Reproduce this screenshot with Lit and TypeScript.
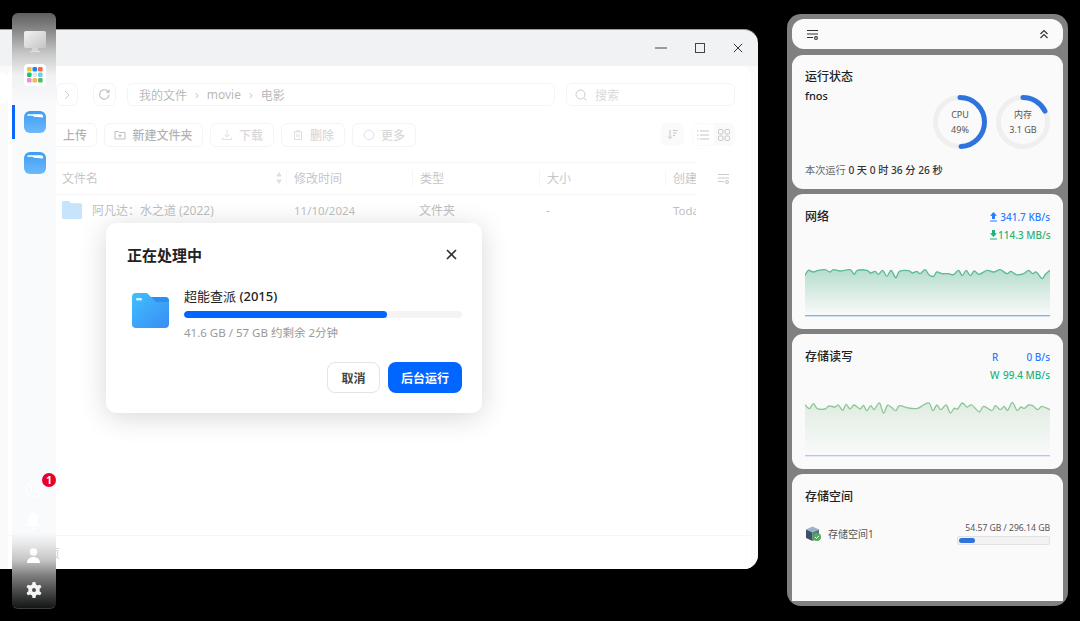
import { LitElement, html, css, svg } from "lit";
import { customElement } from "lit/decorators.js";

type P = [number, number];
const NET: P[] = [[75,255],[85,240],[100,245],[115,240],[135,238],[150,245],[160,238],[180,242],[210,238],[222,252],[232,240],[260,240],[272,248],[285,243],[295,252],[308,240],[320,258],[333,240],[347,262],[358,243],[385,241],[397,248],[410,243],[420,250],[435,238],[447,254],[460,258],[470,245],[485,250],[505,250],[520,253],[535,240],[546,256],[558,240],[570,256],[582,242],[597,252],[620,240],[640,245],[660,238],[680,250],[692,243],[708,253],[730,250],[745,240],[757,250],[768,245],[785,265],[795,252],[809,240]];
const DISK: P[] = [[75,223],[88,235],[100,220],[112,235],[135,236],[147,227],[165,230],[175,224],[188,240],[198,222],[210,236],[222,224],[240,236],[250,225],[260,241],[272,226],[282,238],[298,218],[310,248],[322,225],[335,232],[347,241],[358,226],[385,233],[412,234],[430,224],[447,218],[458,241],[470,224],[482,238],[498,224],[510,248],[522,234],[532,236],[546,218],[560,230],[575,224],[597,245],[610,228],[635,241],[645,226],[660,238],[672,228],[682,240],[696,216],[710,240],[722,230],[732,234],[745,224],[757,226],[772,238],[785,228],[809,238]];

function smooth(p: P[]): string {
  let d = `M${p[0][0]} ${p[0][1]}`;
  for (let i = 0; i < p.length - 1; i++) {
    const a = p[Math.max(0, i - 1)], b = p[i], c = p[i + 1], e = p[Math.min(p.length - 1, i + 2)];
    d += `C${b[0] + (c[0] - a[0]) / 6} ${b[1] + (c[1] - a[1]) / 6} ${c[0] - (e[0] - b[0]) / 6} ${c[1] - (e[1] - b[1]) / 6} ${c[0]} ${c[1]}`;
  }
  return d;
}

function chart(id: string, pts: P[], line: string, top: string, topOp: number, base: string) {
  const d = smooth(pts);
  return html`<svg class="chart" viewBox="75 200 734 180" preserveAspectRatio="none">
    <defs><linearGradient id=${id} x1="0" y1="0" x2="0" y2="1">
      <stop offset="0" stop-color=${top} stop-opacity=${topOp}></stop>
      <stop offset="1" stop-color=${top} stop-opacity="0"></stop>
    </linearGradient></defs>
    <path d="${d}L809 375L75 375Z" fill="url(#${id})"></path>
    <path d=${d} fill="none" stroke=${line} stroke-width="4"></path>
    <path d="M75 376H809" stroke=${base} stroke-width="3"></path>
  </svg>`;
}

const filterIcon = (c: string) => html`<svg width="13" height="13" viewBox="0 0 13 13" fill="none" stroke=${c} stroke-width="1.1"><path d="M1 2.5H12M1 6H12M1 9.5H7"/><circle cx="10" cy="10" r="1.4"/></svg>`;

function ring(label: string, value: string, pct: number) {
  const r = 24.5, c = 2 * Math.PI * r;
  return html`<div class="ring">
    <svg width="54" height="54" viewBox="0 0 54 54">
      <circle cx="27" cy="27" r=${r} fill="none" stroke="#efefef" stroke-width="5"></circle>
      <circle cx="27" cy="27" r=${r} fill="none" stroke="#2f74de" stroke-width="5" stroke-linecap="round"
        stroke-dasharray="${c * pct} ${c}" transform="rotate(-90 27 27)"></circle>
    </svg>
    <div class="ring-text"><span>${label}</span><span>${value}</span></div>
  </div>`;
}

const folderBlue = html`<svg width="22" height="22" viewBox="0 0 22 22">
  <defs><linearGradient id="fb" x1="0" y1="0" x2="0" y2="1"><stop offset="0" stop-color="#3f9df2"/><stop offset="1" stop-color="#6db9fb"/></linearGradient></defs>
  <rect width="22" height="22" rx="6" fill="url(#fb)"/>
  <path d="M3 4.6C3 3.6 4 3.2 5 3.2H17C18.5 3.2 19 4 19 5V6.4L10 5.7L8.5 4.8H4Z" fill="#fff"/>
</svg>`;

@customElement("app-root")
export class AppRoot extends LitElement {
  static styles = css`
    :host { display: block; position: relative; width: 1080px; height: 621px; background: #000; overflow: hidden;
      font-family: "Noto Sans", "Noto Sans CJK SC", sans-serif; color: #333; }
    svg { display: block; flex: none; }

    .window { position: absolute; left: 0; top: 29px; width: 758px; height: 540px; display: flex; flex-direction: column;
      background: #f1f2f4; border-radius: 0 14px 14px 0; overflow: hidden; border-top: 1px solid #9a9a9a; box-sizing: border-box; }
    .titlebar { height: 36px; flex: none; display: flex; justify-content: flex-end; align-items: center; padding-right: 15px; gap: 28px; }
    .titlebar .min { width: 12px; height: 12px; }
    .titlebar .sm { width: 10px; height: 10px; }
    .body { flex: 1; display: flex; position: relative; min-height: 0; }
    .side { width: 8px; flex: none; padding-top: 7px; }
    .side div { height: 31px; background: #fff; border-radius: 0 6px 6px 0; }
    .main { flex: 1; background: #fff; border-radius: 10px 10px 0 0; margin-right: 7px; padding: 17px 16px 0 0;
      display: flex; flex-direction: column; min-width: 0; }
    .scrim { position: absolute; inset: 0; background: rgba(255,255,255,.62); }

    .nav { display: flex; gap: 11px; height: 23px; padding-left: 48px; }
    .box { border: 1px solid #dfe1e5; border-radius: 6px; box-sizing: border-box; display: flex; align-items: center; justify-content: center; }
    .sq { width: 23px; height: 23px; }
    .refresh { margin-left: 5px; }
    .fwd { margin-right: -1px; width: 22px; }
    .path { flex: 1; justify-content: flex-start; padding-left: 11px; gap: 8px; font-size: 12px; color: #444; }
    .path i { font-style: normal; color: #777; }
    .search { width: 169px; justify-content: flex-start; padding-left: 8px; gap: 8px; font-size: 12px; color: #999; }

    .actions { display: flex; margin-top: 17px; height: 24px; padding-left: 40px; gap: 7px; }
    .btn { font-size: 12px; font-weight: 500; gap: 6px; color: #333; width: 64px; }
    .btn.off { color: #999; }
    .btn.off svg { opacity: .6; }
    .b-up { width: 49px; padding-left: 5px; }
    .b-new { width: 99px; }
    .actions .grow { flex: 1; }
    .sort { width: 23px; height: 23px; background: #f1f2f4; border-radius: 6px; display: flex; align-items: center; justify-content: center; }
    .view { width: 43px; height: 23px; background: #f1f2f4; border-radius: 6px; display: flex; align-items: center; padding: 1px; box-sizing: border-box; margin-left: 1px; }
    .view span { flex: 1; display: flex; align-items: center; justify-content: center; height: 100%; border-radius: 5px; }
    .view span:first-child { background: #fff; }

    .table { margin-top: 15px; position: relative; font-size: 12px; }
    .thead, .trow { display: grid; grid-template-columns: 238px 126px 127px 126px 31px; width: 648px; margin-left: 40px; overflow: hidden; align-items: center; }
    .thead { height: 31px; border-top: 1px solid #e6e7ea; border-bottom: 1px solid #e6e7ea; color: #666; }
    .cell { padding-left: 7px; white-space: nowrap; overflow: hidden; position: relative; display: flex; align-items: center; justify-content: space-between; height: 14px; }
    .thead .cell { border-left: 1px solid #e6e7ea; height: 16px; margin-bottom: 2px; }
    .thead .cell:first-child { border-left: 0; padding-left: 14px; padding-right: 3px; }
    .trow { height: 32px; color: #555; }
    .trow .cell { height: 18px; margin-bottom: 2px; }
    .trow .cell:first-child { padding-left: 13px; justify-content: flex-start; gap: 9px; height: 22px; }
    .date { font-size: 11.5px; padding-left: 8px !important; }
    .set { position: absolute; left: 709px; top: 10px; }
    .footer { margin-top: auto; height: 33px; margin-right: -16px; border-top: 1px solid #e6e7ea; font-size: 12px; color: #777; display: flex; align-items: center; padding-left: 40px; flex: none; }

    .dock { position: absolute; left: 12px; top: 13px; width: 44px; height: 596px; box-sizing: border-box; border-radius: 6px; display: flex; flex-direction: column; align-items: center;
      border-bottom: 1px solid #3c3c3c;
      background: linear-gradient(#5f5f5f 0, #8f8f8f 20px, #c6c6c6 40px, #f0f1f2 62px, #f9fafc 90px, #f9fafc 520px, #e6e6e6 532px, #c5c5c5 547px, #7c7c7c 563px, #3c3d3c 582px, #111214 596px); }
    .dock .ic { position: absolute; left: 12px; }
    .ic.mon { top: 18px; }
    .ic.grid { top: 51px; }
    .ic.f1 { top: 98px; }
    .ic.f2 { top: 139px; }
    .ic.sync { left: 13px; top: 467px; }
    .ic.bell { left: 14px; top: 500px; }
    .ic.user { left: 15px; top: 535px; }
    .ic.gear { left: 14px; top: 569px; }
    .active { position: absolute; left: 0; top: 92px; width: 3px; height: 34px; background: #0a66ff; }
    .badge { position: absolute; left: 30px; top: 460px; width: 14px; height: 14px; border-radius: 50%; background: #e8002d; color: #fff; font-size: 10px; font-weight: 700; line-height: 14px; text-align: center; }

    .dialog { position: absolute; left: 106px; top: 223px; width: 376px; height: 190px; box-sizing: border-box; background: #fff; border-radius: 10px;
      box-shadow: 0 4px 28px rgba(0,0,0,.16); padding: 19px 20px 20px 21px; display: flex; flex-direction: column; }
    .dlg-head { display: flex; justify-content: space-between; align-items: center; height: 24px; }
    .dlg-head b { font-size: 15px; font-weight: 700; color: #222; }
    .dlg-close { margin-right: 5px; }
    .dlg-body { display: flex; margin-top: 21px; gap: 15px; padding-left: 5px; }
    .dlg-folder { margin-top: 6px; }
    .dlg-info { flex: 1; }
    .dlg-name { font-size: 13px; font-weight: 400; color: #222; line-height: 18px; }
    .dlg-name span { font-weight: 500; }
    .bar { height: 7px; margin-top: 6px; border-radius: 4px; background: #f4f4f5; overflow: hidden; }
    .bar div { height: 100%; background: #0066ff; border-radius: 4px; }
    .dlg-sub { font-size: 11.5px; color: #999; margin-top: 7px; line-height: 16px; }
    .dlg-foot { margin-top: auto; display: flex; justify-content: flex-end; gap: 8px; }
    .b { height: 31px; border-radius: 8px; box-sizing: border-box; font-size: 12px; font-weight: 700; display: flex; align-items: center; justify-content: center; }
    .cancel { width: 53px; border: 1px solid #e4e4e6; color: #444; }
    .ok { width: 74px; background: #0066ff; color: #fff; }

    .panel { position: absolute; left: 787px; top: 14px; width: 281px; height: 592px; box-sizing: border-box; background: #808080; border-radius: 14px; padding: 5px; display: flex; flex-direction: column; gap: 5px; }
    .card { background: #fafafa; border-radius: 11px; width: 271px; box-sizing: border-box; padding: 14px 13px; position: relative; flex: none; }
    .pill { height: 30px; padding: 0 14px; display: flex; align-items: center; justify-content: space-between; border-radius: 12px; margin-bottom: 1px; }
    .h { font-size: 12px; font-weight: 500; color: #222; line-height: 16px; }
    .status { height: 134px; }
    .host { font-size: 11px; font-weight: 500; color: #222; margin-top: 3px; line-height: 16px; }
    .rings { position: absolute; right: 13px; top: 40px; display: flex; gap: 9px; }
    .ring { position: relative; width: 54px; height: 54px; }
    .ring-text { position: absolute; inset: 0; display: flex; flex-direction: column; align-items: center; justify-content: center; font-size: 9px; line-height: 15px; color: #555; }
    .uptime { position: absolute; left: 13px; top: 107px; font-size: 10.2px; font-weight: 500; color: #333; white-space: nowrap; line-height: 16px; }
    .uptime span { font-weight: 400; color: #666; }
    .graph { height: 135px; padding-top: 15px; }
    .rates { position: absolute; right: 13px; top: 16px; display: flex; flex-direction: column; gap: 4px; align-items: flex-end; font-size: 10px; font-weight: 500; line-height: 14px; white-space: nowrap; }
    .rate { display: flex; align-items: center; justify-content: space-between; }
    .rate-a { width: 61px; }
    .rate-b { width: 61px; }
    .rate-c { width: 58px; }
    .rate-d { width: 60px; }
    .blue { color: #2a7bff; }
    .green { color: #1fb27a; }
    .chart { position: absolute; left: 13px; top: 63px; width: 245px; height: 60px; }
    .storage { flex: 1; border-radius: 11px 11px 0 0; padding-top: 15px; }
    .vol { display: flex; align-items: center; margin-top: 17px; justify-content: space-between; }
    .vol-l { display: flex; align-items: center; gap: 6px; font-size: 10px; color: #555; }
    .vol-r { width: 93px; font-size: 8.6px; color: #555; text-align: right; line-height: 12px; white-space: nowrap; display: flex; flex-direction: column; align-items: flex-end; }
    .vbar { width: 93px; height: 9px; box-sizing: border-box; border: 1px solid #e2e2e2; background: #f2f2f2; border-radius: 2px; margin-top: 2px; padding: 1px; }
    .vbar div { height: 100%; background: #2f74de; border-radius: 3px; }
  `;

  render() {
    return html`
      <div class="window">
        <div class="titlebar">
          <svg class="min" viewBox="0 0 12 12" stroke="#444" fill="none" stroke-width="1.1"><path d="M0 6H12"/></svg>
          <svg class="sm" viewBox="0 0 12 12" stroke="#444" fill="none" stroke-width="1.2"><rect x=".6" y=".6" width="10.8" height="10.8"/></svg>
          <svg class="sm" viewBox="0 0 12 12" stroke="#333" fill="none" stroke-width="1.2"><path d="M1 1L11 11M11 1L1 11"/></svg>
        </div>
        <div class="body">
          <div class="side"><div></div></div>
          <div class="main">
            <div class="nav">
              <div class="box sq fwd"><svg width="8" height="10" viewBox="0 0 8 10" fill="none" stroke="#777" stroke-width="1"><path d="M2 1L6 5L2 9"/></svg></div>
              <div class="box sq refresh"><svg width="13" height="13" viewBox="0 0 13 13" fill="none" stroke="#555" stroke-width="1.1"><path d="M11 6.5A4.7 4.7 0 1 1 9.5 3L11 4.3M11 1.5V4.3H8.2"/></svg></div>
              <div class="box path">我的文件 <i>›</i> movie <i>›</i> 电影</div>
              <div class="box search"><svg width="12" height="12" viewBox="0 0 12 12" fill="none" stroke="#777" stroke-width="1"><circle cx="5.5" cy="5.5" r="4.5"/><path d="M9 9L11.5 11.5"/></svg>搜索</div>
            </div>
            <div class="actions">
              <div class="box btn b-up">上传</div>
              <div class="box btn b-new"><svg width="12" height="12" viewBox="0 0 12 12" fill="none" stroke="#555"><path d="M1 10V2.5H4.5L5.5 3.5H11V10ZM6 5V8.5M4.3 6.7H7.7"/></svg>新建文件夹</div>
              <div class="box btn off"><svg width="12" height="12" viewBox="0 0 12 12" fill="none" stroke="#777"><path d="M6 1V8M3.5 5.5L6 8L8.5 5.5M1.5 8.5V10.5H10.5V8.5"/></svg>下载</div>
              <div class="box btn off"><svg width="12" height="12" viewBox="0 0 12 12" fill="none" stroke="#777"><path d="M1.5 3H10.5M4.5 3V1.5H7.5V3M2.5 3V10.5H9.5V3M5 5V8.5M7 5V8.5"/></svg>删除</div>
              <div class="box btn off"><svg width="12" height="12" viewBox="0 0 12 12" fill="none" stroke="#777"><circle cx="6" cy="6" r="4.8"/></svg>更多</div>
              <div class="grow"></div>
              <div class="sort"><svg width="11" height="11" viewBox="0 0 11 11" fill="none" stroke="#666"><path d="M3 1V9.5M1 7.5L3 9.5L5 7.5M6 1.5H10.5M6 4H9.5M6 6.5H8"/></svg></div>
              <div class="view">
                <span><svg width="12" height="10" viewBox="0 0 12 10" fill="none" stroke="#666"><path d="M3 1H12M3 5H12M3 9H12M0 1H1.4M0 5H1.4M0 9H1.4"/></svg></span>
                <span><svg width="12" height="12" viewBox="0 0 12 12" fill="none" stroke="#666"><rect x=".5" y=".5" width="4.5" height="4.5" rx="1.2"/><rect x="7" y=".5" width="4.5" height="4.5" rx="1.2"/><rect x=".5" y="7" width="4.5" height="4.5" rx="1.2"/><rect x="7" y="7" width="4.5" height="4.5" rx="1.2"/></svg></span>
              </div>
            </div>
            <div class="table">
              <div class="thead">
                <div class="cell">文件名<svg width="8" height="14" viewBox="0 0 8 14" fill="#aaa"><path d="M4 1L7 5.5H1ZM4 13L1 8.5H7Z"/></svg></div>
                <div class="cell">修改时间</div><div class="cell">类型</div><div class="cell">大小</div><div class="cell">创建</div>
              </div>
              <div class="trow">
                <div class="cell"><svg width="22" height="20" viewBox="0 0 22 20"><path d="M1 3C1 1.5 2 1 3 1H8L10 3.2H19.5C20.5 3.2 21 4 21 5V17.5C21 18.5 20.3 19 19.5 19H2.5C1.5 19 1 18.5 1 17.5Z" fill="#6ab8f7"/></svg>阿凡达：水之道 (2022)</div>
                <div class="cell date">11/10/2024</div><div class="cell">文件夹</div><div class="cell">-</div><div class="cell date">Today</div>
              </div>
              <div class="set">${filterIcon("#777")}</div>
            </div>
            <div class="footer">页</div>
          </div>
          <div class="scrim"></div>
        </div>
      </div>

      <div class="dialog">
        <div class="dlg-head"><b>正在处理中</b>
          <svg class="dlg-close" width="11" height="11" viewBox="0 0 11 11" fill="none" stroke="#333" stroke-width="1.7"><path d="M1 1L10 10M10 1L1 10"/></svg>
        </div>
        <div class="dlg-body">
          <svg class="dlg-folder" width="37" height="35" viewBox="0 0 37 35">
            <defs><linearGradient id="df" x1="0" y1="0" x2="1" y2="1"><stop offset="0" stop-color="#3fc0ff"/><stop offset="1" stop-color="#3a8cf2"/></linearGradient></defs>
            <path d="M0 4C0 1.5 1.5 0 3.5 0H15L19 4H33C35.5 4 37 5.5 37 8V31C37 33.5 35.5 35 33 35H4C1.5 35 0 33.5 0 31Z" fill="url(#df)"/>
            <path d="M19 4H33C35.5 4 37 5.5 37 8V9H24Z" fill="#2a8ff0"/>
            <rect x="4" y="5" width="6" height="2.6" rx="1.3" fill="#d4f1ff"/>
          </svg>
          <div class="dlg-info">
            <div class="dlg-name">超能查派 <span>(2015)</span></div>
            <div class="bar"><div style="width:73%"></div></div>
            <div class="dlg-sub">41.6 GB / 57 GB 约剩余 2分钟</div>
          </div>
        </div>
        <div class="dlg-foot"><div class="b cancel">取消</div><div class="b ok">后台运行</div></div>
      </div>

      <div class="dock">
        <svg class="ic mon" width="22" height="23" viewBox="0 0 22 23"><defs><linearGradient id="mon" x1="0" y1="0" x2="1" y2="1"><stop offset="0" stop-color="#f2f2f2"/><stop offset="1" stop-color="#c4c4c4"/></linearGradient></defs><rect width="22" height="17" rx="2" fill="url(#mon)"/><rect x="8" y="17" width="6" height="3" fill="#d4d4d4"/><rect x="6" y="20" width="10" height="1.2" fill="#dfdfdf"/></svg>
        <svg class="ic grid" width="22" height="22" viewBox="0 0 22 22">
          <rect width="22" height="22" rx="4" fill="#fff"/>
          ${[["#fbc02d",3,3],["#1e88e5",8.5,3],["#ef6a50",14,3],["#1cc36b",3,8.5],["#dfe8f2",8.5,8.5],["#6fcdf4",14,8.5],["#ee8fce",3,14],["#f3b562",8.5,14],["#4cc15a",14,14]].map(([c,x,y]) => svg`<rect x=${x} y=${y} width="4.6" height="4.6" rx="1.3" fill=${c}/>`)}
        </svg>
        <div class="active"></div>
        <div class="ic f1">${folderBlue}</div>
        <div class="ic f2">${folderBlue}</div>
        <svg class="ic sync" width="18" height="18" viewBox="0 0 18 18" fill="none" stroke="#fff" stroke-width="1.2"><circle cx="9" cy="9" r="8"/><path d="M6 6V12M12 6V12M4.5 7.5L6 6L7.5 7.5M10.5 10.5L12 12L13.5 10.5"/></svg>
        <div class="badge">1</div>
        <svg class="ic bell" width="14" height="17" viewBox="0 0 14 17" fill="#fff"><path d="M7 0C3.5 0 2.3 3 2.3 5.5V10L0 13H14L11.7 10V5.5C11.7 3 10.5 0 7 0ZM5 14.5H9C9 16 8 17 7 17S5 16 5 14.5Z"/></svg>
        <svg class="ic user" width="13" height="15" viewBox="0 0 13 15" fill="#fff"><circle cx="6.5" cy="4" r="3.7"/><path d="M0 15C0 11 3 9 6.5 9S13 11 13 15Z"/></svg>
        <svg class="ic gear" width="16" height="16" viewBox="2.2 1.5 19.6 20" fill="#f4f4f4"><path fill-rule="evenodd" d="M13.8 1.5L14.4 4.6C15.2 4.9 15.9 5.3 16.6 5.8L19.6 4.8L21.4 7.9L19 10C19.1 10.9 19.1 12.1 19 13L21.4 15.1L19.6 18.2L16.6 17.2C15.9 17.7 15.2 18.1 14.4 18.4L13.8 21.5H10.2L9.6 18.4C8.8 18.1 8.1 17.7 7.4 17.2L4.4 18.2L2.6 15.1L5 13C4.9 12.1 4.9 10.9 5 10L2.6 7.9L4.4 4.8L7.4 5.8C8.1 5.3 8.8 4.9 9.6 4.6L10.2 1.5ZM12 9A2.5 2.5 0 1 0 12 14A2.5 2.5 0 0 0 12 9Z"/></svg>
      </div>

      <div class="panel">
        <div class="card pill">
          ${filterIcon("#333")}
          <svg width="10" height="10" viewBox="0 0 10 10" fill="none" stroke="#333" stroke-width="1.2"><path d="M1.5 5L5 1.5L8.5 5M1.5 9L5 5.5L8.5 9"/></svg>
        </div>
        <div class="card status">
          <div class="h">运行状态</div>
          <div class="host">fnos</div>
          <div class="rings">${ring("CPU", "49%", 0.49)}${ring("内存", "3.1 GB", 0.175)}</div>
          <div class="uptime"><span>本次运行</span> 0 天 0 时 36 分 26 秒</div>
        </div>
        <div class="card graph">
          <div class="h">网络</div>
          <div class="rates">
            <div class="rate rate-a blue"><svg width="9" height="10" viewBox="0 0 9 10" fill="#2a7bff"><path d="M4.5 0L8 3.8H6V7H3V3.8H1ZM1 8.6H8V9.6H1Z"/></svg><span>341.7 KB/s</span></div>
            <div class="rate rate-b green"><svg width="9" height="10" viewBox="0 0 9 10" fill="#1fb27a"><path d="M3 0H6V3.3H8L4.5 7L1 3.3H3ZM1 8.6H8V9.6H1Z"/></svg><span>114.3 MB/s</span></div>
          </div>
          ${chart("g1", NET, "#5cbb93", "#2ca472", 0.33, "#5c95e8")}
        </div>
        <div class="card graph">
          <div class="h">存储读写</div>
          <div class="rates">
            <div class="rate rate-c blue"><span>R</span><span>0 B/s</span></div>
            <div class="rate rate-d green"><span>W</span><span>99.4 MB/s</span></div>
          </div>
          ${chart("g2", DISK, "#8cc795", "#5ba86d", 0.17, "#9ab8ea")}
        </div>
        <div class="card storage">
          <div class="h">存储空间</div>
          <div class="vol">
            <div class="vol-l">
              <svg width="17" height="16" viewBox="0 0 17 16"><path d="M1 3.5L7.5 0.5L14 3.5L7.5 6.5Z" fill="#9ab5c9"/><path d="M1 3.5L7.5 6.5V15L1 12Z" fill="#3d5266"/><path d="M14 3.5L7.5 6.5V15L14 12Z" fill="#5b7489"/><circle cx="12" cy="11" r="4" fill="#4caf50"/><path d="M10 11L11.5 12.5L14 9.8" fill="none" stroke="#fff"/></svg>
              存储空间1
            </div>
            <div class="vol-r">54.57 GB / 296.14 GB<div class="vbar"><div style="width:18%"></div></div></div>
          </div>
        </div>
      </div>
    `;
  }
}
